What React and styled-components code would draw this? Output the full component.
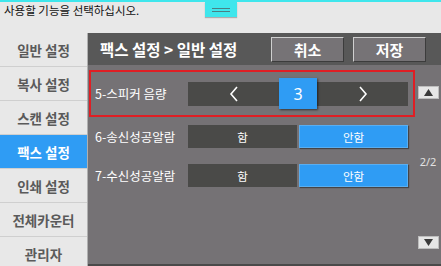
import React, { useState } from "react";
import styled, { createGlobalStyle } from "styled-components";

const GlobalStyle = createGlobalStyle`
  body {
    margin: 0;
    font-family: "Noto Sans CJK KR", "Noto Sans", sans-serif;
  }
`;

const Page = styled.div`
  display: flex;
  flex-direction: column;
  width: 441px;
  height: 266px;
  overflow: hidden;
  background-color: #e8e8e8;
`;

const TopBar = styled.div`
  position: relative;
  height: 31px;
  border-top: 2px solid #3fe6ec;
  padding-left: 4px;
  font-size: 11.5px;
  line-height: 17px;
  color: #111;
`;

const PullTab = styled.div`
  position: absolute;
  left: 205px;
  top: 0;
  width: 32px;
  height: 15px;
  background-color: #3fe6ec;
  box-shadow: 0 1px 1px rgba(0, 0, 0, 0.25);
  display: flex;
  flex-direction: column;
  align-items: center;
  justify-content: center;
  gap: 2px;
  &::before,
  &::after {
    content: "";
    width: 18px;
    height: 1px;
    background-color: #4b7f84;
  }
`;

const Body = styled.div`
  display: flex;
  flex: 1;
  min-height: 0;
`;

const Sidebar = styled.div`
  display: flex;
  flex-direction: column;
  width: 87px;
  border-right: 1px solid #b0b0b0;
`;

const MenuItem = styled.div`
  height: 34px;
  flex-shrink: 0;
  display: flex;
  align-items: center;
  justify-content: center;
  border-bottom: 1px solid #cfcfcf;
  box-sizing: border-box;
  font-size: 13.5px;
  font-weight: 700;
  color: ${({ $active }) => ($active ? "#ffffff" : "#5a5a5a")};
  background-color: ${({ $active }) => ($active ? "#2f9cf4" : "#e8e8e8")};
`;

const Main = styled.div`
  display: flex;
  flex-direction: column;
  flex: 1;
  background-color: #757275;
  border-bottom: 2px solid #4a4a4a;
`;

const Header = styled.div`
  height: 32px;
  display: flex;
  align-items: center;
  justify-content: space-between;
  padding: 0 15px 0 12px;
  background-color: #585858;
`;

const Title = styled.div`
  color: #ffffff;
  font-size: 15.5px;
  font-weight: 700;
`;

const HeaderButtons = styled.div`
  display: flex;
  gap: 9px;
`;

const HeaderButton = styled.button`
  width: 73px;
  height: 25px;
  background-color: #767376;
  border: 1px solid #cfcfcf;
  border-right-color: #3c3c3c;
  border-bottom-color: #3c3c3c;
  color: #ffffff;
  font-family: inherit;
  font-size: 15px;
  font-weight: 700;
  padding: 0;
`;

const Content = styled.div`
  display: flex;
  flex: 1;
`;

const RowList = styled.div`
  display: flex;
  flex-direction: column;
  width: 326px;
  padding: 5px 0 0 1px;
`;

const Row = styled.div`
  display: flex;
  align-items: center;
  box-sizing: border-box;
  height: ${({ $selected }) => ($selected ? "47px" : "23px")};
  margin-top: ${({ $selected }) => ($selected ? "0" : "8px")};
  margin-bottom: ${({ $selected }) => ($selected ? "0" : "8px")};
  padding: 0 4px;
  border: 2px solid ${({ $selected }) => ($selected ? "#e01e24" : "transparent")};
`;

const Label = styled.div`
  width: 93px;
  color: #ffffff;
  font-size: 12.5px;
  white-space: nowrap;
`;

const Stepper = styled.div`
  display: flex;
  align-items: center;
  width: 220px;
  height: 24px;
  background-color: #4a4a48;
`;

const Arrow = styled.div`
  flex: 1;
  display: flex;
  justify-content: center;
  color: #ffffff;
`;

const Value = styled.div`
  width: 38px;
  height: 31px;
  display: flex;
  align-items: center;
  justify-content: center;
  background-color: #2f9cf4;
  box-shadow: 1px 1px 2px rgba(0, 0, 0, 0.55);
  color: #ffffff;
  font-family: "Noto Sans", sans-serif;
  font-size: 16px;
`;

const Toggle = styled.div`
  display: flex;
  gap: 2px;
  width: 220px;
  height: 23px;
`;

const ToggleOption = styled.div`
  flex: 1;
  display: flex;
  align-items: center;
  justify-content: center;
  font-size: 11.5px;
  color: #ffffff;
  background-color: ${({ $on }) => ($on ? "#2f9cf4" : "#4a4a48")};
  border: 1px solid ${({ $on }) => ($on ? "#5aaef0" : "#4a4a48")};
  box-shadow: ${({ $on }) => ($on ? "1px 1px 1px rgba(0,0,0,0.4)" : "none")};
`;

const ScrollColumn = styled.div`
  display: flex;
  flex-direction: column;
  align-items: center;
  padding: 21px 0 15px;
  flex: 1;
`;

const ScrollButton = styled.div`
  width: 21px;
  height: 13px;
  display: flex;
  align-items: center;
  justify-content: center;
  background-color: #e6e6e6;
  border: 1px solid #bdbdbd;
  box-sizing: border-box;
`;

const PageCount = styled.div`
  margin: auto 0;
  padding-bottom: 12px;
  color: #e2e2e2;
  font-family: "Noto Sans", sans-serif;
  font-size: 11px;
`;

const Chevron = ({ dir }) => (
  <svg width="10" height="16" viewBox="0 0 10 16">
    <path
      d={dir === "left" ? "M8 1 L2 8 L8 15" : "M2 1 L8 8 L2 15"}
      fill="none"
      stroke="#ffffff"
      strokeWidth="1.6"
    />
  </svg>
);

const Triangle = ({ up }) => (
  <svg width="9" height="7" viewBox="0 0 9 7">
    <path d={up ? "M4.5 0 L9 7 L0 7 Z" : "M0 0 L9 0 L4.5 7 Z"} fill="#3a3a3a" />
  </svg>
);

const menu = ["일반 설정", "복사 설정", "스캔 설정", "팩스 설정", "인쇄 설정", "전체카운터", "관리자"];

const App = () => {
  const [volume] = useState(3);
  const toggles = [
    { label: "6-송신성공알람", on: false },
    { label: "7-수신성공알람", on: false },
  ];

  return (
    <Page>
      <GlobalStyle />
      <TopBar>
        사용할 기능을 선택하십시오.
        <PullTab />
      </TopBar>
      <Body>
        <Sidebar>
          {menu.map((item) => (
            <MenuItem key={item} $active={item === "팩스 설정"}>
              {item}
            </MenuItem>
          ))}
        </Sidebar>
        <Main>
          <Header>
            <Title>팩스 설정 &gt; 일반 설정</Title>
            <HeaderButtons>
              <HeaderButton>취소</HeaderButton>
              <HeaderButton>저장</HeaderButton>
            </HeaderButtons>
          </Header>
          <Content>
            <RowList>
              <Row $selected>
                <Label>5-스피커 음량</Label>
                <Stepper>
                  <Arrow>
                    <Chevron dir="left" />
                  </Arrow>
                  <Value>{volume}</Value>
                  <Arrow>
                    <Chevron dir="right" />
                  </Arrow>
                </Stepper>
              </Row>
              {toggles.map((t) => (
                <Row key={t.label}>
                  <Label>{t.label}</Label>
                  <Toggle>
                    <ToggleOption $on={t.on}>함</ToggleOption>
                    <ToggleOption $on={!t.on}>안함</ToggleOption>
                  </Toggle>
                </Row>
              ))}
            </RowList>
            <ScrollColumn>
              <ScrollButton>
                <Triangle up />
              </ScrollButton>
              <PageCount>2/2</PageCount>
              <ScrollButton>
                <Triangle />
              </ScrollButton>
            </ScrollColumn>
          </Content>
        </Main>
      </Body>
    </Page>
  );
};

export default App;
